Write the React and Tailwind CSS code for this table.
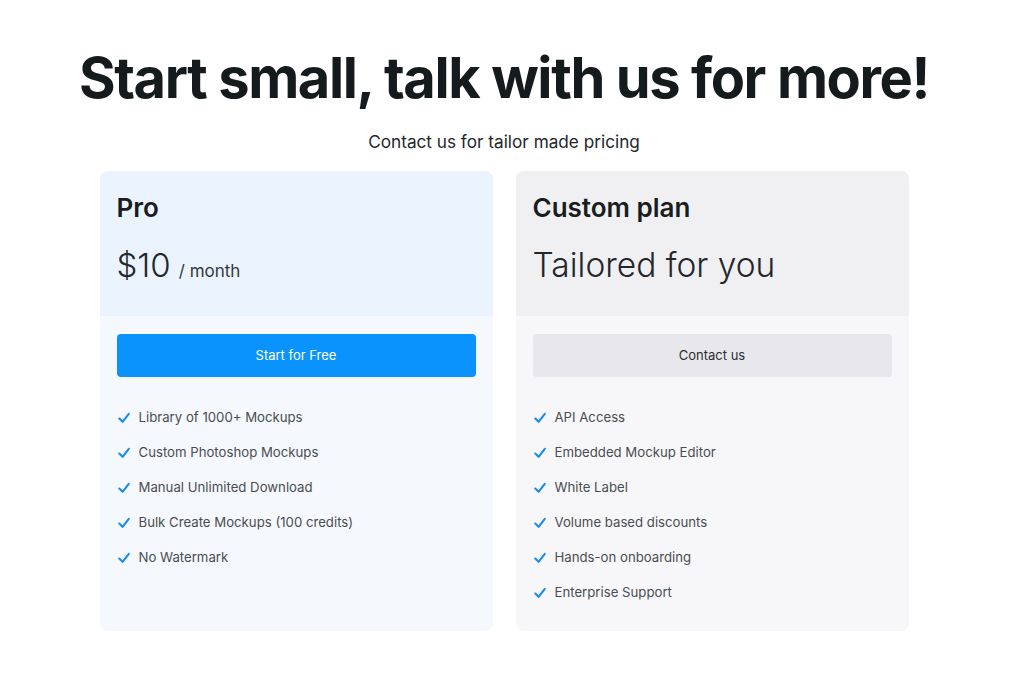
const proFeatures = [
  'Library of 1000+ Mockups',
  'Custom Photoshop Mockups',
  'Manual Unlimited Download',
  'Bulk Create Mockups (100 credits)',
  'No Watermark',
]

const customFeatures = [
  'API Access',
  'Embedded Mockup Editor',
  'White Label',
  'Volume based discounts',
  'Hands-on onboarding',
  'Enterprise Support',
]

function Check() {
  return (
    <svg width="12" height="12" viewBox="0 0 12 12" className="shrink-0">
      <path d="M1.3 6.6 L4.6 9.8 L10.8 1.8" fill="none" stroke="#1a8cf0" strokeWidth="2.1" strokeLinecap="round" strokeLinejoin="round" />
    </svg>
  )
}

function Features({ items }) {
  return (
    <ul className="flex flex-col gap-[15px] px-[17px] pt-[31px] pb-[28px]">
      {items.map((f, i) => (
        <li key={i} className="flex items-center gap-[9px] h-[20px] text-[13.2px] text-[#4a4d52] pl-[1px]">
          <Check />
          <span>{f}</span>
        </li>
      ))}
    </ul>
  )
}

export default function App() {
  return (
    <div className="min-h-screen bg-white text-[#16191c]" style={{ fontFamily: 'Inter, "Noto Sans", sans-serif' }}>
      <div className="flex flex-col items-center pt-[45px] pr-[16px]">
        <h1 className="text-[56px] leading-[66px] font-bold tracking-[-0.025em] text-[#151a1d]">Start small, talk with us for more!</h1>
        <p className="mt-[18px] text-[17.2px] text-[#24272b]">Contact us for tailor made pricing</p>
        <div className="mt-[16px] grid grid-cols-2 gap-[23px] w-[809px]">
          <div className="rounded-[8px] bg-[#f5f8fc] flex flex-col overflow-hidden">
            <div className="bg-[#eaf3fe] h-[145px] px-[17px] pt-[22px]">
              <div className="text-[26px] leading-[30px] font-semibold text-[#1a1d20]">Pro</div>
              <div className="mt-[22px] flex items-baseline gap-[8px]">
                <span className="text-[33px] leading-[40px] font-light text-[#23272b]">$10</span>
                <span className="text-[17px] text-[#33373b]">/ month</span>
              </div>
            </div>
            <div className="px-[17px] pt-[18px]">
              <button className="w-full h-[43px] rounded-[4px] bg-[#0a93fd] text-white text-[13px]">Start for Free</button>
            </div>
            <Features items={proFeatures} />
          </div>
          <div className="rounded-[8px] bg-[#f7f7f9] flex flex-col overflow-hidden">
            <div className="bg-[#f0f0f3] h-[145px] px-[17px] pt-[22px]">
              <div className="text-[26px] leading-[30px] font-semibold text-[#1a1d20]">Custom plan</div>
              <div className="mt-[22px] text-[33.5px] leading-[40px] font-light text-[#23272b]">Tailored for you</div>
            </div>
            <div className="px-[17px] pt-[18px]">
              <button className="w-full h-[43px] rounded-[4px] bg-[#e8e8ec] text-[#2a2d31] text-[13px]">Contact us</button>
            </div>
            <Features items={customFeatures} />
          </div>
        </div>
      </div>
    </div>
  )
}
